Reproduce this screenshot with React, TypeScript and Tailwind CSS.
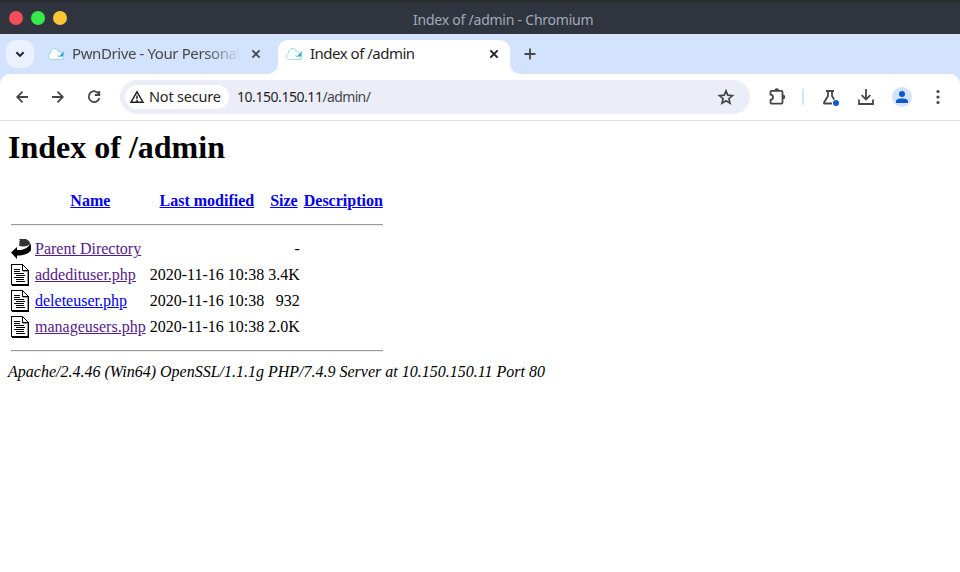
import React from "react";

const Cloud = () => (
  <svg width="16" height="16" viewBox="0 0 16 16" fill="none" className="shrink-0">
    <path d="M15.400 8.500v4.900H3.700C-.4 13.200-.4 8.200 2.600 7.400 2.200 1.800 8.800.6 10.200 5.300c1.300-.4 2 .5 2.200 1.700" fill="#fff" stroke="#8bd2f5" strokeWidth=".9" />
    <path d="m11.800 9.300 4-4.100-.5 4.500-1.500 1.100-2-.2z" fill="#2fabe1" />
    <path d="m9.300 9.800 2 .6.500 1" stroke="#8fa9b8" strokeWidth="1" />
  </svg>
);

const FileIcon = () => (
  <svg width="20" height="22" viewBox="0 0 20 22" shapeRendering="crispEdges" className="block">
    <path d="M0 0h12v1h1v1h1v1h1v1h1v1h1v1h1v16H1v-1H0z" fill="#000" />
    <path d="M1 1h10v6h5v13H1z" fill="#fff" />
    <path d="M12 2h1v1h1v1h1v1h1v1h-4z" fill="#fff" />
    <path d="M12 7h5v1h-5zM16 8h1v12h-1z" fill="#999" />
    <path d="M3 5h6v1H3zM3 7h6v1H3zM3 9h10v1H3zM5 11h9v1H5zM3 13h10v1H3zM5 15h8v1H5zM5 17h9v1H5z" fill="#000" />
  </svg>
);

const BackIcon = () => (
  <svg width="20" height="22" viewBox="0 0 20 22" className="block">
    <path d="M9 1h6l3 2 1.500 3c-2 1.500-4 2.300-7 2.500L8 8z" fill="#333" />
    <path d="M8 1h1v1H8zM8 3h1v1H8zM8 5h1v1H8zM8 7h1v1H8z" fill="#777" />
    <path d="M0 14.500 6 9v3c6 .5 11-2 13.300-6l.7 1v5c-2 4-8 5.500-14 5.500V21z" fill="#000" />
  </svg>
);

type SymProps = { d: string; size?: number; color?: string; weight?: number; fill?: string };

const Sym = ({ d, size = 20, color = "#474747", weight = 1.8, fill }: SymProps) => (
  <svg width={size} height={size} viewBox="0 0 20 20" fill="none" stroke={color} strokeWidth={weight} className="block shrink-0">
    <path d={d} />
    {fill && <path d={fill} fill={color} stroke="none" />}
  </svg>
);

const files = [
  { name: "addedituser.php", size: "3.4K", color: "text-[#551a8b]" },
  { name: "deleteuser.php", size: "932", color: "text-[#0000ee]" },
  { name: "manageusers.php", size: "2.0K", color: "text-[#551a8b]" },
];

const Rule = () => (
  <tr>
    <th colSpan={5} className="p-px">
      <hr className="my-2 h-0.5 border-y border-t-[#9a9a9a] border-b-[#eeeeee]" />
    </th>
  </tr>
);

const Head = ({ children }: { children: string }) => (
  <th className="p-px text-center font-bold">
    <a className="text-[#0000ee] underline">{children}</a>
  </th>
);

export default function App() {
  return (
    <div className="h-[572px] w-[960px] overflow-hidden bg-white font-['Noto_Sans',sans-serif]">
      <header className="flex h-[34px] items-center border-t-[3px] border-[#2b2d33] bg-[#30343f] px-[9px]">
        <div className="flex w-[404px] -translate-y-px gap-2">
          <span className="size-3.5 rounded-full bg-[#f54f57]" />
          <span className="size-3.5 rounded-full bg-[#38ea49]" />
          <span className="size-3.5 rounded-full bg-[#fcc536]" />
        </div>
        <span className="pt-0.5 text-[14px] leading-5 tracking-[-0.23px] text-[#a3aab8]">Index of /admin - Chromium</span>
      </header>

      <div className="flex h-10 items-start bg-[#d3e2fd] pl-1.5 pt-1.5">
        <div className="flex h-7 w-7 items-center justify-center rounded-[10px] bg-[#ebf1fe]">
          <Sym size={16} color="#202124" weight={2.4} d="m5.500 7.800 4.500 4.500 4.500-4.500" />
        </div>
        <div className="ml-3.5 flex h-7 w-[220px] items-center">
          <Cloud />
          <span className="ml-2 w-[168px] overflow-hidden whitespace-nowrap pb-0.5 text-[15px] leading-5 tracking-[-0.4px] text-[#474747] [mask-image:linear-gradient(to_right,black_80%,transparent)]">
            PwnDrive - Your Personal
          </span>
          <span className="ml-2"><Sym size={16} weight={2.2} d="m5.500 5.500 9 9M14.500 5.500l-9 9" /></span>
        </div>
        <div className="flex items-end">
          <span className="size-2.5 bg-[radial-gradient(circle_at_0_0,transparent_9.5px,white_10px)]" />
          <div className="flex h-[34px] w-[232px] items-start rounded-t-[10px] bg-white pl-2">
            <div className="flex h-7 items-center">
              <Cloud />
              <span className="ml-2 w-[168px] pb-0.5 text-[15px] leading-5 tracking-[-0.5px] text-[#1f1f1f]">Index of /admin</span>
              <span className="ml-2"><Sym size={16} color="#1f1f1f" weight={2.4} d="m5.500 5.500 9 9M14.500 5.500l-9 9" /></span>
            </div>
          </div>
          <span className="size-2.5 bg-[radial-gradient(circle_at_100%_0,transparent_9.5px,white_10px)]" />
        </div>
        <div className="flex h-7 items-center">
          <Sym d="M10 4.500v11M4.500 10h11" />
        </div>
      </div>

      <div className="bg-[#d3e2fd]">
        <nav className="flex h-[47px] items-center rounded-t-[10px] border-b border-[#dfe1e4] bg-white pl-3">
          <div className="flex w-[108px] gap-4">
            <Sym d="M16 10H5M10.500 4.700 5.200 10l5.300 5.300" />
            <Sym d="M4 10h11M9.500 4.700 14.800 10l-5.300 5.300" />
            <Sym d="M14.900 7A5.400 5.400 0 1 0 15.400 11M15.300 4v4h-4.500" />
          </div>
          <div className="flex h-[34px] w-[630px] items-center rounded-full bg-[#ebeef8] pl-[5px] pr-3.5">
            <div className="flex h-6 w-[104px] items-center rounded-full bg-white pl-1">
              <Sym size={16} color="#1f1f1f" d="M10 3.500 17.500 16.500h-15zM10 8v4.500M10 13.500v2" />
              <span className="ml-1 whitespace-nowrap pb-0.5 text-[14.500px] leading-5 tracking-[-0.2px] text-[#1f1f1f]">Not secure</span>
            </div>
            <span className="ml-2 flex-1 text-[14px] leading-5 tracking-[-0.45px] text-[#1f1f1f]">10.150.150.11<span className="tracking-[-0.65px] text-[#474747]">/admin/</span></span>
            <Sym weight={1.7} d="m10 3.900 1.800 4.300 4.700.4-3.600 3.100 1.100 4.600-4-2.450-4 2.450 1.100-4.600-3.600-3.100 4.700-.4z" />
          </div>
          <div className="flex flex-1 items-center pl-[17px]">
            <Sym d="M4.500 3.900H14.500Q15.500 3.900 15.500 4.900V15.600Q15.500 16.600 14.500 16.600H4.500Q3.500 16.600 3.500 15.600V13C6.800 12.500 6.800 8 3.500 7.500V4.900Q3.500 3.900 4.500 3.900z" fill="M7.500 3.500a2.300 2.300 0 0 1 4.600 0zM16 7.700a2.300 2.300 0 0 1 0 4.600z" />
            <span className="ml-[15px] h-4 w-0.5 bg-[#d3e3fd]" />
            <span className="relative ml-4">
              <Sym d="M6 4h8M8 4v5l-3.800 6.300Q3.500 16.500 4.500 16.500H12M12 4v5l2.200 3.500" />
              <span className="absolute bottom-px right-px size-1.5 rounded-full bg-[#0b57d0]" />
            </span>
            <span className="ml-4"><Sym d="M10 2v10M5.700 8.200 10 12.500l4.300-4.300M3 12.500V17h14v-4.500" /></span>
            <span className="ml-4 flex size-5 items-center justify-center rounded-full bg-[#d3e3fd]">
              <svg width="14" height="14" viewBox="0 0 14 14" fill="#0b57d0"><circle cx="7" cy="4" r="3" /><path d="M1 13v-2c0-3.500 12-3.500 12 0v2z" /></svg>
            </span>
            <svg className="ml-4" width="20" height="20" fill="#474747"><circle cx="10" cy="4.500" r="1.600" /><circle cx="10" cy="10" r="1.600" /><circle cx="10" cy="15.500" r="1.600" /></svg>
          </div>
        </nav>
      </div>

      <main className="p-2 font-['Liberation_Serif',serif] text-[16px] leading-[18px] text-black">
        <h1 className="mb-[21.440px] text-[32px] font-bold leading-[37px]">Index of /admin</h1>
        <table className="border-separate border-spacing-[2px] whitespace-nowrap">
          <tbody>
            <tr className="h-6">
              <th className="w-[22px] p-px" />
              <Head>Name</Head><Head>Last modified</Head><Head>Size</Head><Head>Description</Head>
            </tr>
            <Rule />
            <tr>
              <td className="p-px"><BackIcon /></td>
              <td className="p-px"><a className="text-[#551a8b] underline">Parent Directory</a></td>
              <td />
              <td className="p-px text-right">-</td>
              <td />
            </tr>
            {files.map((f) => (
              <tr key={f.name}>
                <td className="p-px"><FileIcon /></td>
                <td className="p-px"><a className={`${f.color} underline`}>{f.name}</a></td>
                <td className="p-px text-right">2020-11-16 10:38</td>
                <td className="p-px text-right">{f.size}</td>
                <td />
              </tr>
            ))}
            <Rule />
          </tbody>
        </table>
        <address className="italic">Apache/2.4.46 (Win64) OpenSSL/1.1.1g PHP/7.4.9 Server at 10.150.150.11 Port 80</address>
      </main>
    </div>
  );
}
